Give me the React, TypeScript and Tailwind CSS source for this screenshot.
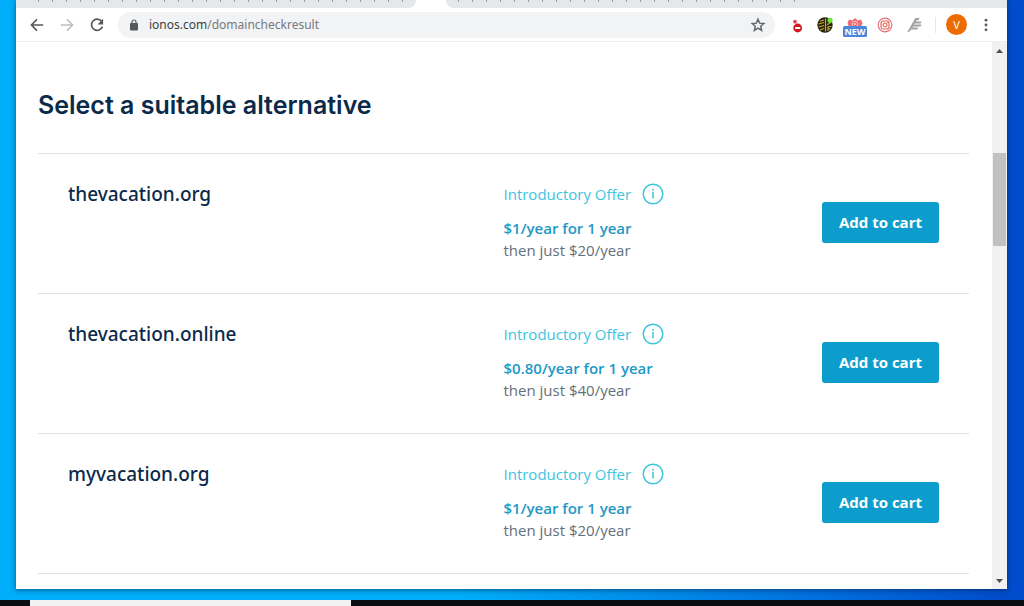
import React from "react";

type Offer = { domain: string; intro: string; renewal: string };

const offers: Offer[] = [
  { domain: "thevacation.org", intro: "$1/year for 1 year", renewal: "then just $20/year" },
  { domain: "thevacation.online", intro: "$0.80/year for 1 year", renewal: "then just $40/year" },
  { domain: "myvacation.org", intro: "$1/year for 1 year", renewal: "then just $20/year" },
];

function TabTicks({ count }: { count: number }) {
  return (
    <div className="flex gap-[13px]" aria-hidden="true">
      {Array.from({ length: count }, (_, i) => (
        <span key={i} className="h-[2px] w-px bg-[#9a9ba0]" />
      ))}
    </div>
  );
}

function TabStrip() {
  return (
    <div className="flex h-2 bg-white">
      <div className="w-[400px] shrink-0 overflow-hidden rounded-br-lg bg-[#e6e7eb] pl-[22px]">
        <TabTicks count={27} />
      </div>
      <div className="w-[30px] shrink-0 bg-white" />
      <div className="min-w-0 flex-1 overflow-hidden rounded-bl-lg bg-[#e6e7eb] pl-3">
        <TabTicks count={25} />
      </div>
    </div>
  );
}

function Toolbar() {
  return (
    <div className="flex h-[34px] shrink-0 items-center border-b border-[#eceeef] bg-white pr-3 pl-3">
      <div className="flex gap-3">
        <button aria-label="Back" className="flex size-[18px] items-center justify-center text-[#55585c]">
          <svg viewBox="0 0 18 18" className="size-[18px]" fill="none" stroke="currentColor" strokeWidth="1.6">
            <path d="M15.2 9H3.6M9 3.4 3.4 9 9 14.6" />
          </svg>
        </button>
        <button aria-label="Forward" className="flex size-[18px] items-center justify-center text-[#bdbfc2]">
          <svg viewBox="0 0 18 18" className="size-[18px]" fill="none" stroke="currentColor" strokeWidth="1.6">
            <path d="M2.8 9h11.6M9 3.4 14.6 9 9 14.6" />
          </svg>
        </button>
        <button aria-label="Reload" className="flex size-[18px] items-center justify-center text-[#55585c]">
          <svg viewBox="0 0 18 18" className="size-[18px]">
            <path d="M13.6 5.3A5.6 5.6 0 1 0 14.4 10.6" fill="none" stroke="currentColor" strokeWidth="1.7" />
            <path d="M15.1 2.8v5.6H9.5z" fill="currentColor" />
          </svg>
        </button>
      </div>
      <div className="ml-3 flex h-[26px] min-w-0 flex-1 items-center rounded-full bg-[#f1f3f4] pr-2 pl-[11px]">
        <svg viewBox="0 0 10 12" className="h-3 w-[10px] shrink-0 text-[#55585c]" aria-hidden="true">
          <rect x="1" y="4" width="8" height="7.4" rx="1" fill="currentColor" />
          <path d="M3 4.5V3a2 2 0 0 1 4 0v1.5" fill="none" stroke="currentColor" strokeWidth="1.2" />
        </svg>
        <a
          href="#domains"
          className="ml-[10px] flex-1 truncate font-['Noto_Sans',sans-serif] text-[12px] leading-5 text-[#77797d]"
        >
          <span className="text-[#3c4043]">ionos.com</span>/domaincheckresult
        </a>
        <button aria-label="Bookmark this tab" className="flex size-[18px] items-center justify-center text-[#606367]">
          <svg viewBox="0 0 18 18" className="size-4">
            <path
              d="M9 2.500 10.800 6.900l4.800.4-3.600 3.100 1.100 4.700L9 12.600l-4.100 2.500L6 10.400 2.400 7.300l4.800-.4z"
              fill="none"
              stroke="currentColor"
              strokeWidth="1.600"
            />
          </svg>
        </button>
      </div>
      <div className="ml-3 flex h-[26px] shrink-0 items-center">
        <button aria-label="Blocker extension" className="flex size-5 items-center justify-center">
          <svg viewBox="0 0 20 20" className="size-5">
            <circle cx="8" cy="6.700" r="1.900" fill="#e0484f" />
            <path d="M7.300 10v4" stroke="#dfa5a8" strokeWidth="1.200" />
            <circle cx="10.700" cy="13" r="4.400" fill="#cf1820" />
            <rect x="8" y="12" width="5.400" height="2" rx=".8" fill="#fff" />
          </svg>
        </button>
        <button aria-label="Maze extension" className="ml-2 flex size-5 items-center justify-center">
          <svg viewBox="0 0 20 20" className="size-5">
            <circle cx="10" cy="10" r="7.700" fill="#25210d" />
            <path
              d="M5 6.200 9 5M3.500 9 9 7.500M3.500 12 9 10.500M5 15l4-1.500M10.500 3.500v13M13 16v-4.500M12 9.800 15.500 7.800M13 11.500h3.500M14.500 14.500v-1.500"
              fill="none"
              stroke="#c4ad2a"
              strokeWidth="1.200"
            />
            <circle cx="15" cy="5.300" r="2.600" fill="#70e534" />
          </svg>
        </button>
        <button aria-label="New extension" className="ml-[6px] flex h-[26px] w-7 items-center justify-center">
          <svg viewBox="0 0 28 26" className="h-[26px] w-7">
            <path d="m8 7.500 3.200 1L14 6l2.800 2.500 3.200-1L21.500 11l-1.500 4H8l-1.500-4z" fill="#ee6b73" />
            <circle cx="14" cy="12" r="2.800" fill="none" stroke="#fbd5d7" strokeWidth=".8" />
            <circle cx="14" cy="12" r="1" fill="#fbd5d7" />
            <rect x="2" y="14" width="24" height="11" rx="1.500" fill="#4b86dc" />
            <text x="14" y="23" textAnchor="middle" fontFamily="Open Sans" fontWeight="700" fontSize="9" fill="#fff">
              NEW
            </text>
          </svg>
        </button>
        <button aria-label="Camera extension" className="ml-[6px] flex size-5 items-center justify-center">
          <svg viewBox="0 0 20 20" className="size-5" fill="none" strokeWidth="1.200">
            <circle cx="10" cy="10" r="6.800" stroke="#e8707c" />
            <rect x="6" y="6" width="8" height="8" rx="2.200" stroke="#e7615e" />
            <circle cx="10" cy="10" r="1.900" stroke="#ed7656" />
            <circle cx="12.400" cy="7.600" r=".5" fill="#e7615e" />
          </svg>
        </button>
        <button aria-label="Feather extension" className="ml-[10px] flex size-5 items-center justify-center">
          <svg viewBox="0 0 20 20" className="size-5" fill="#a3a4a7">
            <path d="M10.500 3h4l-.8 2.200h-2.200l-.4 1.200h5.400l-.8 2h-6l-.5 1h7.300l-.8 2.100H8.200l-.7 1h5.800l-.9 2H6.200L3.800 17H2.500z" />
            <path d="M2.500 17 10.500 3l1.500.5-6.500 12z" />
          </svg>
        </button>
        <div className="mx-[10px] h-4 w-px bg-[#e4e6e8]" />
        <button
          aria-label="Profile"
          className="flex size-[21px] items-center justify-center rounded-full bg-[#ed6c02] text-[11px] leading-4 text-white"
        >
          V
        </button>
        <button aria-label="Menu" className="ml-[10px] flex size-[18px] items-center justify-center text-[#55585c]">
          <svg viewBox="0 0 18 18" className="size-[18px]" fill="currentColor">
            <circle cx="9" cy="4.200" r="1.400" />
            <circle cx="9" cy="9" r="1.400" />
            <circle cx="9" cy="13.800" r="1.400" />
          </svg>
        </button>
      </div>
    </div>
  );
}

function InfoIcon() {
  return (
    <svg viewBox="0 0 22 22" className="size-[22px]" aria-hidden="true">
      <circle cx="11" cy="11" r="9.800" fill="none" stroke="#3cc5dc" strokeWidth="1.500" />
      <path d="M11 8.800v6.700" stroke="#3cc5dc" strokeWidth="1.500" />
      <circle cx="11" cy="6.700" r=".9" fill="#3cc5dc" />
    </svg>
  );
}

function OfferRow({ offer }: { offer: Offer }) {
  return (
    <li className="flex h-[140px] border-t border-[#e0e2e4] px-[30px]">
      <h2 className="w-1/2 pt-[27px] font-['Noto_Sans',sans-serif] text-[19px] leading-[26px] font-medium text-[#0b2a4a]">
        {offer.domain}
      </h2>
      <div className="flex-1 pt-[29px] text-[15px]">
        <div className="flex h-[22px] items-center gap-[11px] text-[#40c4de]">
          <span className="leading-[22px]">Introductory Offer</span>
          <button aria-label={`About the ${offer.domain} offer`}>
            <InfoIcon />
          </button>
        </div>
        <p className="mt-3 leading-[22px] font-semibold text-[#2298c5]">{offer.intro}</p>
        <p className="leading-[22px] text-[#637079]">{offer.renewal}</p>
      </div>
      <button className="mt-12 h-[41px] shrink-0 rounded-[3px] bg-[#0d9dcd] px-[17px] pb-[2px] text-[15px] leading-5 font-bold text-white">
        Add to cart
      </button>
    </li>
  );
}

function Scrollbar() {
  return (
    <div className="flex w-[15px] shrink-0 flex-col items-center bg-[#f1f1f1]" aria-hidden="true">
      <svg viewBox="0 0 15 16" className="h-4 w-[15px]">
        <path d="M4 11h7L7.500 7z" fill="#505050" />
      </svg>
      <div className="flex w-full flex-1 flex-col px-px">
        <div className="flex-[95]" />
        <div className="flex-[93] bg-[#c1c1c1]" />
        <div className="flex-[327]" />
      </div>
      <svg viewBox="0 0 15 16" className="h-4 w-[15px]">
        <path d="M4 6h7L7.500 10z" fill="#505050" />
      </svg>
    </div>
  );
}

export default function App() {
  return (
    <div className="flex h-screen flex-col overflow-hidden bg-linear-to-r from-[#00aefa] from-45% via-[#0078e2] via-75% to-[#004ccc] to-98% font-['Open_Sans',sans-serif]">
      <div className="mr-[17px] mb-[11px] ml-4 flex min-h-0 flex-1 flex-col bg-white shadow-[0_1px_5px_rgba(0,30,60,0.6)]">
        <TabStrip />
        <Toolbar />
        <div className="flex min-h-0 flex-1">
          <main className="min-w-0 flex-1 overflow-hidden pr-[23px] pl-[22px]">
            <h1 className="pt-[47px] pb-8 font-[Inter,sans-serif] text-[25px] leading-8 font-semibold text-[#0b2a4a]">
              Select a suitable alternative
            </h1>
            <ul className="border-b border-[#e0e2e4]">
              {offers.map((offer) => (
                <OfferRow key={offer.domain} offer={offer} />
              ))}
            </ul>
          </main>
          <Scrollbar />
        </div>
      </div>
      <div className="flex h-[6px] shrink-0 bg-[#0c0d12]">
        <div className="ml-[30px] w-[321px] bg-[#f2f2f2]" />
      </div>
    </div>
  );
}
